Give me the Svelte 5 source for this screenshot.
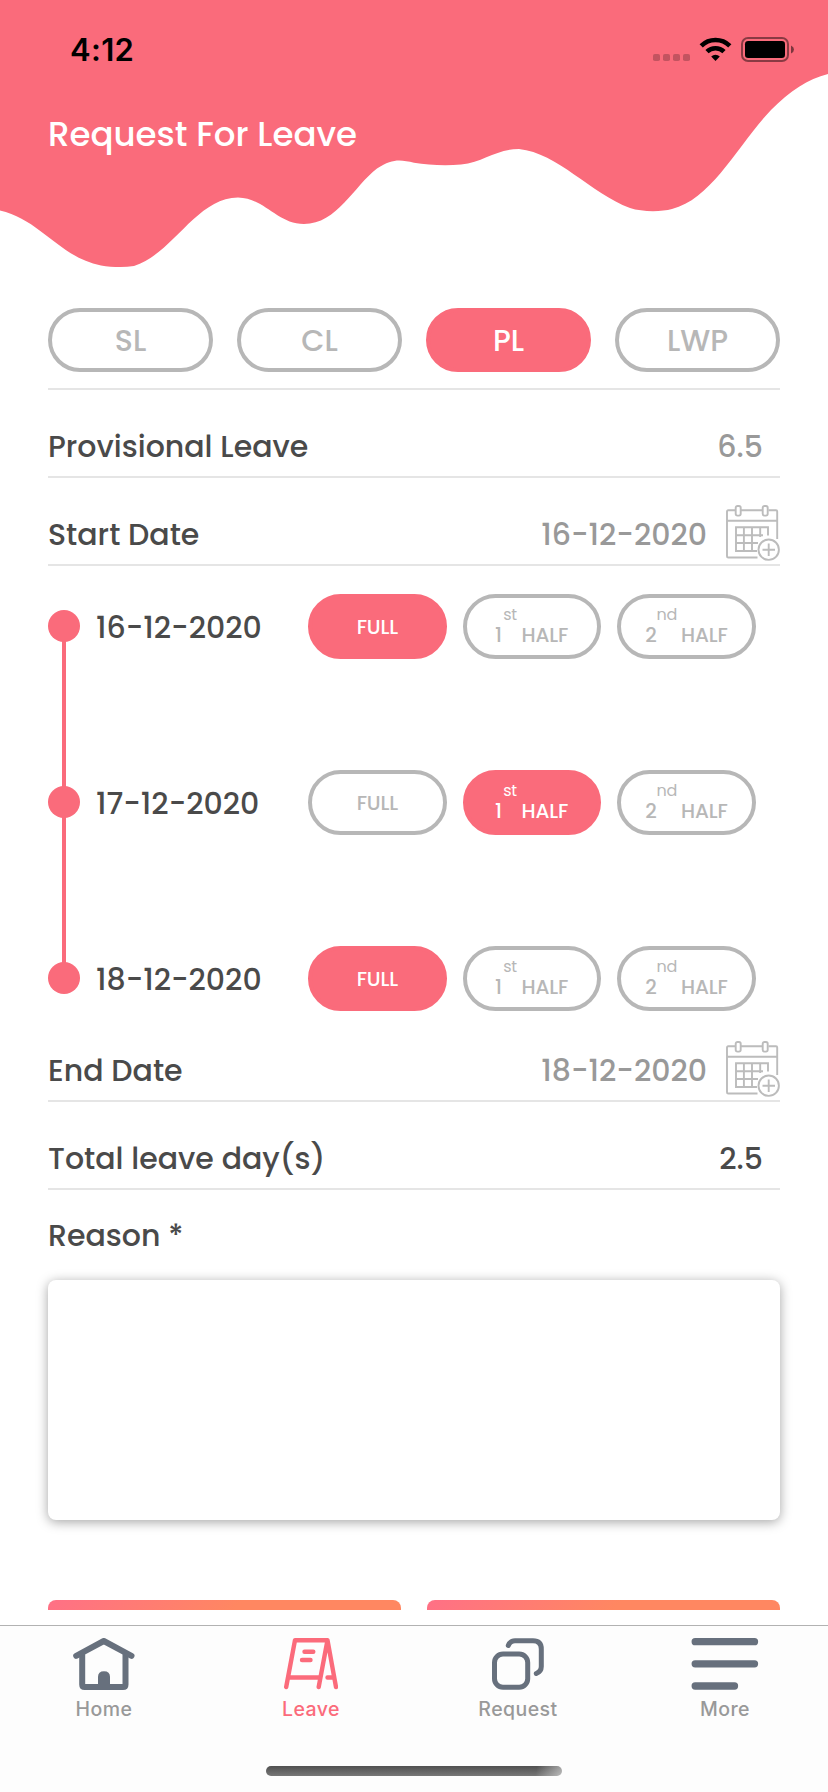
<script>
  const leaveTypes = ['SL', 'CL', 'PL', 'LWP'];
  let selectedType = $state('PL');

  let days = $state([
    { date: '16-12-2020', pick: 'full' },
    { date: '17-12-2020', pick: 'first' },
    { date: '18-12-2020', pick: 'full' }
  ]);

  const tabs = ['Home', 'Leave', 'Request', 'More'];
  let activeTab = $state('Leave');
</script>

{#snippet calendar()}
  <svg class="calendar" viewBox="0 0 54 56" fill="none" stroke="#bcbcbc" stroke-width="1.9">
    <path d="M9.500 5.300H2.200Q1 5.300 1 6.500V51.200Q1 52.500 2.200 52.500H31.500M14.800 5.300H36.500M42.500 5.300H50Q51.200 5.300 51.200 6.500V34M1 15.800H51.200" />
    <rect x="9.700" y="1" width="5" height="9.600" rx="1.800" />
    <rect x="36.700" y="1" width="5" height="9.600" rx="1.800" />
    <path d="M31 46H10V22.300H42V30.500M10 30.300H37M10 38H32M17.900 22.300V46M26 22.300V46M34.200 22.300V32" />
    <circle cx="42.700" cy="44.700" r="10.200" />
    <path d="M36.500 44.700H49M42.700 38.500V51" />
  </svg>
{/snippet}

{#snippet tabIcon(name)}
  {#if name === 'Home'}
    <svg class="icon" width="62" height="52" viewBox="0 0 62 52" fill="none" stroke="#67707d" stroke-linejoin="round" stroke-linecap="round">
      <path d="M9.200 17V46.500Q9.200 49 11.700 49H50Q52.500 49 52.500 46.500V17" stroke-width="6" />
      <path d="M3.200 17.800L30.800 3L58.500 17.800" stroke-width="6" />
      <path d="M25 50V39Q25 33.300 31 33.300T37 39V50Z" fill="#67707d" stroke="none" />
    </svg>
  {:else if name === 'Leave'}
    <svg class="icon" width="54" height="52" viewBox="0 0 54 52" fill="none" stroke="#fb6b7b" stroke-width="4.400" stroke-linecap="round" stroke-linejoin="round">
      <path d="M2.200 49L11 2.200H43.500L52 49M43.500 2.200L34.700 49M6 39.500H36M43.500 39.500H50M20.500 13.700H29.300M18 22H26.500" />
    </svg>
  {:else if name === 'Request'}
    <svg class="icon" width="52" height="52" viewBox="0 0 52 52" fill="none" stroke="#67707d" stroke-width="5" stroke-linecap="round">
      <rect x="2.500" y="16" width="33.200" height="33.200" rx="8.500" />
      <path d="M16.300 7.500Q18.300 2.700 23 2.700H41Q49.300 2.700 49.300 11V28.500Q49.300 33.500 44.300 35.500" />
    </svg>
  {:else}
    <svg class="icon" width="68" height="52" viewBox="0 0 68 52" stroke="#67707d" stroke-width="7.300" stroke-linecap="round">
      <path d="M4.200 3.700H63.500M4.200 25.800H63.500M4.200 48H43.500" />
    </svg>
  {/if}
{/snippet}

<div class="screen">
  <header>
    <svg class="wave" viewBox="0 0 828 308">
      <path
        fill="#fa6b7b"
        d="M0 0H828V74C808 79 790 91 771 110C737 146 712 199 672 209C661 212 642 212 630 208C590 193 558 153 519 149C496 149 484 162 461 164.500C445 166 428 165 414 162.700C401 160 393 158 377 168.500C354 186 337 224 304 224C277 224 265 198 238 197.500C196 198 174 253 134 266C123 268 111 267 101 265.500C59 257 41 220 0 210.500Z"
      />
    </svg>
    <div class="status">
      <span class="clock">4:12</span>
      <svg width="143" height="26" viewBox="0 0 143 26">
        <g fill="#000" fill-opacity=".22">
          <rect x="0" y="17" width="7" height="7" rx="1.800" />
          <rect x="10" y="17" width="7" height="7" rx="1.800" />
          <rect x="20" y="17" width="7" height="7" rx="1.800" />
          <rect x="30" y="17" width="7" height="7" rx="1.800" />
        </g>
        <g fill="none" stroke="#000" stroke-width="4.600">
          <path d="M48.200 8.800A20.500 20.500 0 0 1 76.800 8.800" />
          <path d="M54 14.600A12.300 12.300 0 0 1 71 14.600" />
        </g>
        <path d="M58.200 19.600A6.200 6.200 0 0 1 66.800 19.600L62.500 24Z" />
        <rect x="89" y="1" width="46" height="23" rx="6" fill="none" stroke="#000" stroke-opacity=".45" stroke-width="2" />
        <rect x="92" y="4" width="40" height="17" rx="3.200" />
        <path d="M138 8.500Q141 9.800 141 12.500T138 16.500Z" fill-opacity=".5" />
      </svg>
    </div>
    <h1>Request For Leave</h1>
  </header>

  <main>
    <div class="types">
      {#each leaveTypes as type}
        <button class="pill" class:on={selectedType === type} onclick={() => (selectedType = type)}>{type}</button>
      {/each}
    </div>

    <div class="row">
      <span>Provisional Leave</span>
      <span class="value number">6.5</span>
    </div>
    <div class="row">
      <span>Start Date</span>
      <span class="value">16-12-2020</span>
      {@render calendar()}
    </div>

    <div class="timeline">
      {#each days as day}
        <div class="day">
          <i class="dot"></i>
          <span class="date">{day.date}</span>
          <div class="parts">
            <button class="pill" class:on={day.pick === 'full'} onclick={() => (day.pick = 'full')}>FULL</button>
            <button class="pill half" class:on={day.pick === 'first'} onclick={() => (day.pick = 'first')}>
              <span class="digit">1</span><span class="ordinal">st</span><span>HALF</span>
            </button>
            <button class="pill half second" class:on={day.pick === 'second'} onclick={() => (day.pick = 'second')}>
              <span class="digit">2</span><span class="ordinal">nd</span><span>HALF</span>
            </button>
          </div>
        </div>
      {/each}
    </div>

    <div class="row">
      <span>End Date</span>
      <span class="value">18-12-2020</span>
      {@render calendar()}
    </div>
    <div class="row">
      <span>Total leave day(s)</span>
      <span class="value number dark">2.5</span>
    </div>

    <label for="reason">Reason *</label>
    <textarea id="reason"></textarea>

    <div class="actions"><i></i><i></i></div>
  </main>

  <nav>
    <div class="tabs">
      {#each tabs as tab}
        <button class="tab" class:active={activeTab === tab} onclick={() => (activeTab = tab)}>
          {@render tabIcon(tab)}
          <span>{tab}</span>
        </button>
      {/each}
    </div>
    <div class="indicator"></div>
  </nav>
</div>

<style>
  :global(body) {
    margin: 0;
    background: #fff;
  }
  .screen {
    box-sizing: border-box;
    width: 828px;
    height: 1792px;
    overflow: hidden;
    display: flex;
    flex-direction: column;
    background: #fff;
    color: #4a4a4a;
    font: 500 30px/41px Poppins, Inter, sans-serif;
  }
  button {
    appearance: none;
    margin: 0;
    padding: 0;
    border: 0;
    background: none;
    color: inherit;
    font: inherit;
  }
  span,
  h1 {
    white-space: nowrap;
  }

  header {
    position: relative;
    height: 308px;
    flex: none;
  }
  .wave {
    position: absolute;
    inset: 0;
    width: 828px;
    height: 308px;
  }
  .status {
    position: relative;
    display: flex;
    justify-content: space-between;
    align-items: flex-start;
    padding: 37px 32px 0 70px;
    height: 77px;
    box-sizing: border-box;
  }
  .clock {
    color: #000;
    font: 600 31px/26px Inter, sans-serif;
    letter-spacing: 0.300px;
  }
  h1 {
    position: relative;
    margin: 34px 0 0 48px;
    color: #fff;
    font-size: 34px;
    line-height: 46px;
    font-weight: 500;
  }

  main {
    flex: none;
    height: 1302px;
    overflow: hidden;
    padding: 0 48px;
  }
  .types {
    display: flex;
    gap: 24px;
    height: 80px;
    border-bottom: 2px solid #e5e5e5;
  }
  .pill {
    box-sizing: border-box;
    width: 165px;
    height: 64px;
    border: 4px solid #b7b7b7;
    border-radius: 32px;
    color: #b7b7b7;
  }
  .pill.on {
    border-color: #fa6b7b;
    background: #fa6b7b;
    color: #fff;
  }

  .row {
    box-sizing: border-box;
    height: 88px;
    padding-top: 36px;
    border-bottom: 2px solid #e5e5e5;
    display: flex;
    align-items: flex-start;
  }
  .value {
    margin-left: auto;
    color: #999;
  }
  .number {
    margin-right: 17px;
  }
  .dark {
    color: #4a4a4a;
  }
  .calendar {
    width: 54px;
    height: 56px;
    margin: -9px 0 0 19px;
  }

  .timeline {
    box-sizing: border-box;
    height: 448px;
    padding-top: 28px;
  }
  .day {
    position: relative;
    display: flex;
    height: 176px;
    align-items: flex-start;
  }
  .dot {
    flex: none;
    width: 32px;
    height: 32px;
    margin-top: 16px;
    border-radius: 50%;
    background: #fa6b7b;
  }
  .day:not(:last-child)::before {
    content: '';
    position: absolute;
    left: 14px;
    top: 32px;
    width: 4px;
    height: 176px;
    background: #fa6b7b;
  }
  .day .date {
    margin: 13px 0 0 16px;
    width: 212px;
  }
  .parts {
    display: flex;
    gap: 16px;
  }
  .parts .pill {
    width: 138.600px;
    height: 65px;
    padding-top: 1px;
    border-radius: 33px;
    font-size: 20px;
    line-height: 26px;
    letter-spacing: -0.150px;
  }
  .parts .half {
    display: flex;
    padding: 24px 0 0 28.400px;
  }
  .ordinal {
    font-size: 16px;
    font-weight: 400;
    line-height: 26px;
    width: 22.900px;
    margin-top: -20px;
  }
  .digit {
    width: 3.700px;
    margin-right: 0;
  }
  .parts .second {
    padding-left: 24px;
  }
  .second .digit {
    width: 7.300px;
  }
  .second .ordinal {
    width: 28.600px;
  }

  label {
    display: block;
    padding-top: 25px;
    height: 65px;
  }
  textarea {
    display: block;
    box-sizing: border-box;
    width: 732px;
    height: 240px;
    border: 0;
    border-radius: 8px;
    background: #fff;
    box-shadow: 0 2px 12px rgba(0, 0, 0, 0.36);
    resize: none;
    outline: none;
  }
  .actions {
    display: flex;
    gap: 26px;
    padding-top: 80px;
  }
  .actions i {
    flex: 1;
    height: 80px;
    border-radius: 8px;
    background: linear-gradient(135deg, #ff7086 0%, #ff8761 45%, #ff8761 100%);
  }

  nav {
    box-sizing: border-box;
    margin-top: 15px;
    height: 167px;
    border-top: 1px solid #b2b2b2;
    background: #fdfdfd;
  }
  .tabs {
    display: grid;
    grid-template-columns: repeat(4, 1fr);
    height: 140px;
  }
  .tab {
    display: flex;
    flex-direction: column;
    align-items: center;
    padding-top: 12px;
    color: #999;
    font: 500 19.500px/26px Inter, sans-serif;
    letter-spacing: 0.450px;
  }
  .tab span {
    margin-top: 6px;
    padding-left: 1px;
  }
  .tab.active {
    color: #fb6b7b;
  }
  .indicator {
    width: 296px;
    height: 10px;
    margin: 0 auto;
    border-radius: 5px;
    background: linear-gradient(100deg, transparent 91%, rgba(255, 255, 255, 0.500) 100%), linear-gradient(#505050, #777);
  }
</style>
